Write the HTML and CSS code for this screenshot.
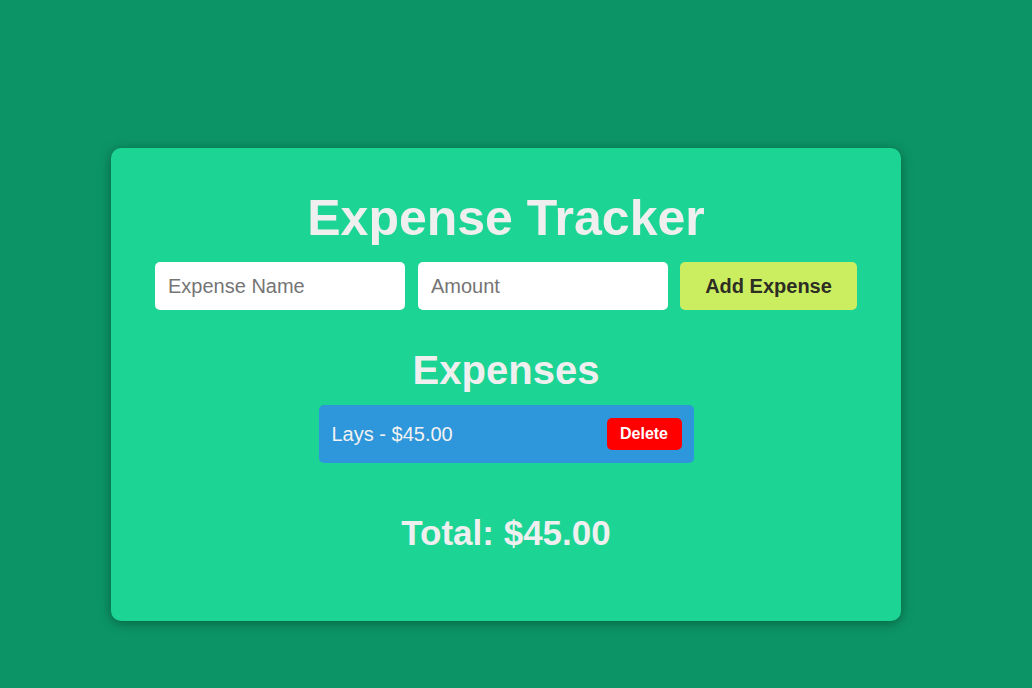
FILE: index.html
```html
<!DOCTYPE html>
<html lang="en">
<head>
<meta charset="UTF-8">
<title>Expense Tracker</title>
<link rel="stylesheet" href="styles.css">
</head>
<body>
<main class="page">
  <section class="card">
    <h1 class="title">Expense Tracker</h1>
    <form class="form">
      <input class="field" type="text" placeholder="Expense Name">
      <input class="field" type="text" placeholder="Amount">
      <button class="add-btn" type="button">Add Expense</button>
    </form>
    <h2 class="subtitle">Expenses</h2>
    <ul class="list">
      <li class="item">
        <span class="item-text">Lays - $45.00</span>
        <button class="del-btn" type="button">Delete</button>
      </li>
    </ul>
    <h2 class="total">Total: $45.00</h2>
  </section>
</main>
</body>
</html>
```
FILE: styles.css
```css
html, body {
  margin: 0;
  padding: 0;
}
body {
  background: #0c9466;
  font-family: "Liberation Sans", Arial, sans-serif;
  min-height: 688px;
}
.page {
  padding: 148px 0 0 111px;
}
.card {
  width: 790px;
  box-sizing: border-box;
  background: #1cd494;
  border-radius: 10px;
  box-shadow: 0 2px 12px rgba(0, 0, 0, 0.35);
  padding: 42px 0 68px;
  display: flex;
  flex-direction: column;
  align-items: center;
}
.title {
  margin: 0;
  font-size: 50px;
  line-height: 56px;
  font-weight: bold;
  color: #efefef;
}
.form {
  margin-top: 16px;
  display: flex;
}
.field {
  width: 250px;
  height: 48px;
  box-sizing: border-box;
  border: none;
  border-radius: 5px;
  padding: 0 13px;
  font-family: "Liberation Sans", Arial, sans-serif;
  font-size: 20px;
  background: #fff;
  color: #333;
  margin-right: 13px;
  outline: none;
}
.field::placeholder {
  color: #757575;
}
.field + .field {
  margin-right: 12px;
}
.add-btn {
  width: 177px;
  height: 48px;
  border: none;
  border-radius: 5px;
  background: #cbed60;
  color: #2d2d24;
  font-family: "Liberation Sans", Arial, sans-serif;
  font-size: 20px;
  font-weight: bold;
  padding: 0;
}
.subtitle {
  margin: 37px 0 0;
  font-size: 40px;
  line-height: 46px;
  font-weight: bold;
  color: #efefef;
}
.list {
  list-style: none;
  margin: 12px 0 0;
  padding: 0;
}
.item {
  width: 375px;
  height: 58px;
  box-sizing: border-box;
  background: #2e96da;
  border-radius: 5px;
  display: flex;
  align-items: center;
  justify-content: space-between;
  padding: 0 12px 0 13px;
}
.item-text {
  font-size: 20px;
  color: #f2f2f2;
}
.del-btn {
  width: 75px;
  height: 32px;
  border: none;
  border-radius: 5px;
  background: #ff0000;
  color: #fff;
  font-family: "Liberation Sans", Arial, sans-serif;
  font-size: 16px;
  font-weight: bold;
  padding: 0;
}
.total {
  margin: 50px 0 0;
  font-size: 35px;
  line-height: 40px;
  font-weight: bold;
  color: #efefef;
}
```
